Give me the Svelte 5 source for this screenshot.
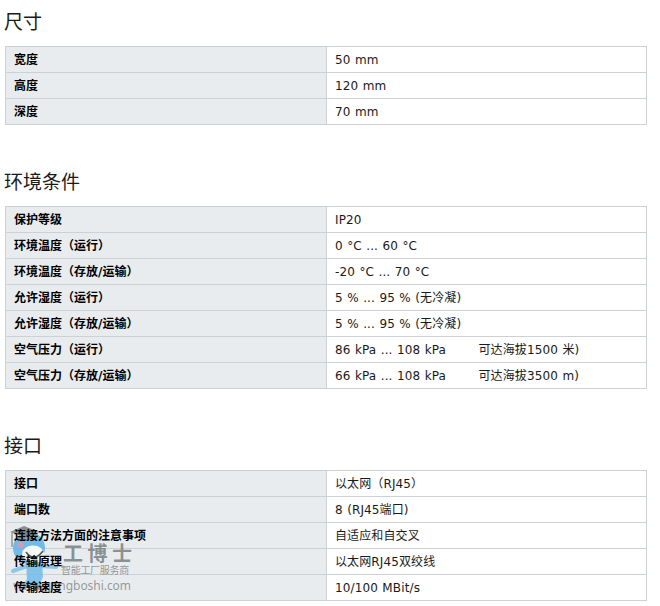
<script>
  // spec tables - same shape for each section
  const sections = [
    {
      title: '尺寸',
      rows: [
        ['宽度', '50 mm'],
        ['高度', '120 mm'],
        ['深度', '70 mm']
      ]
    },
    {
      title: '环境条件',
      rows: [
        ['保护等级', 'IP20'],
        ['环境温度（运行）', '0 °C ... 60 °C'],
        ['环境温度（存放/运输）', '-20 °C ... 70 °C'],
        ['允许湿度（运行）', '5 % ... 95 % (无冷凝)'],
        ['允许湿度（存放/运输）', '5 % ... 95 % (无冷凝)'],
        ['空气压力（运行）', '86 kPa ... 108 kPa', '可达海拔1500 米)'],
        ['空气压力（存放/运输）', '66 kPa ... 108 kPa', '可达海拔3500 m)']
      ]
    },
    {
      title: '接口',
      rows: [
        ['接口', '以太网（RJ45）'],
        ['端口数', '8 (RJ45端口)'],
        ['连接方法方面的注意事项', '自适应和自交叉'],
        ['传输原理', '以太网RJ45双绞线'],
        ['传输速度', '10/100 MBit/s']
      ]
    }
  ]
</script>

<div class="page">
  {#each sections as section}
    <section class="spec">
      <h2>{section.title}</h2>
      <table>
        <tbody>
          {#each section.rows as row}
            <tr>
              <th><span class="cell-text">{row[0]}</span></th>
              <td>
                <span class="cell-text">{row[1]}</span>
                {#if row[2]}<span class="note">{row[2]}</span>{/if}
              </td>
            </tr>
          {/each}
        </tbody>
      </table>
    </section>
  {/each}

  <!-- watermark sits between cell backgrounds and cell text -->
  <div class="watermark">
    <svg class="mascot" width="56" height="68" viewBox="0 0 56 68">
      <!-- legs + body -->
      <path d="M16 37 L32 37 L33 52 L30 58 L33 63 L24 63 L23 58 L19 63 L12 62 L17 54 Z" fill="#6fbce8" opacity="0.85" />
      <path d="M17 41 L3 46 M31 41 L46 42" stroke="#6fbce8" stroke-width="4" stroke-linecap="round" opacity="0.75" />
      <!-- head -->
      <ellipse cx="19" cy="23" rx="16" ry="16" fill="#63b6e6" opacity="0.9" />
      <ellipse cx="23" cy="29" rx="11" ry="8.5" fill="#f6f8f8" />
      <circle cx="11" cy="20" r="3" fill="#f08fb0" opacity="0.85" />
      <path d="M16 27 Q24 38 33 26" stroke="#555" stroke-width="1.6" fill="none" />
      <!-- mortar board -->
      <path d="M0 7 L14 1 L29 7 L14 12 Z" fill="#777c7c" opacity="0.85" />
      <path d="M6 10 L6 14 Q14 17 23 14 L23 10 L14 13 Z" fill="#8c9090" opacity="0.8" />
      <path d="M2 8 L2 22" stroke="#777c7c" stroke-width="1.4" opacity="0.8" />
    </svg>
    <span class="wm-name">工 博 士</span>
    <span class="wm-sub">智能工厂服务商</span>
    <span class="wm-url">www.gongboshi.com</span>
  </div>
</div>

<style>
  :global(body) {
    margin: 0;
    background: #fff;
  }

  .page {
    position: relative;
    width: 660px;
    height: 606px;
    overflow: hidden;
    padding: 4px 13px 0 5px;
    box-sizing: border-box;
    font-family: "DejaVu Sans", "Noto Sans CJK SC", sans-serif;
    font-size: 12px;
    color: #1a1a1a;
  }

  .spec {
    margin-bottom: 39px;
  }

  h2 {
    margin: 0 0 0 -1px;
    height: 42px;
    padding-top: 6px;
    box-sizing: border-box;
    font-size: 19px;
    line-height: 24px;
    font-weight: 400;
    color: #1a1a1a;
  }

  table {
    width: 642px;
    border-collapse: collapse;
    table-layout: fixed;
  }

  tr {
    height: 26px;
  }

  th,
  td {
    border: 1px solid #ccd1d5;
    padding: 0 8px;
    text-align: left;
    line-height: 16px;
    box-sizing: border-box;
    white-space: nowrap;
  }

  th {
    width: 321px;
    background: #e9ecef;
    font-weight: 700;
    color: #000;
  }

  td {
    letter-spacing: 0.12px;
    word-spacing: 0.5px;
  }

  .cell-text,
  .note {
    position: relative;
    z-index: 2;
  }

  .note {
    margin-left: 28px;
  }

  .watermark {
    position: absolute;
    z-index: 1;
    left: 10px;
    top: 525px;
    width: 130px;
    height: 76px;
    pointer-events: none;
  }

  .mascot {
    position: absolute;
    left: 0;
    top: 0;
  }

  .wm-name {
    position: absolute;
    left: 53px;
    top: 14px;
    font-size: 20px;
    line-height: 28px;
    font-weight: 700;
    color: rgba(95, 105, 105, 0.7);
    white-space: nowrap;
    font-family: "Noto Sans CJK SC", sans-serif;
  }

  .wm-sub {
    position: absolute;
    left: 51px;
    top: 38px;
    font-size: 10px;
    line-height: 14px;
    letter-spacing: -0.3px;
    color: rgba(120, 125, 125, 0.8);
    white-space: nowrap;
    font-family: "Noto Sans CJK SC", sans-serif;
  }

  .wm-url {
    position: absolute;
    left: 3px;
    top: 53px;
    font-family: "Noto Sans", sans-serif;
    font-size: 12px;
    line-height: 16px;
    color: rgba(110, 115, 115, 0.7);
    white-space: nowrap;
    letter-spacing: -0.05px;
  }
</style>
